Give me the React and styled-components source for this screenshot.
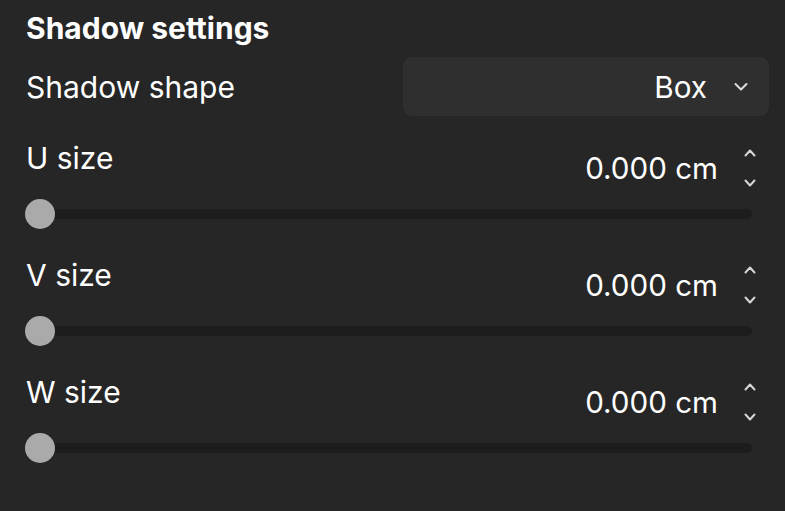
import React from "react";
import styled, { createGlobalStyle } from "styled-components";

const Global = createGlobalStyle`
  html, body { margin: 0; padding: 0; background: #262626; }
  body { font-family: Inter, "Noto Sans", sans-serif; color: #ffffff; }
`;

const Panel = styled.div`
  width: 785px;
  height: 511px;
  box-sizing: border-box;
  padding: 10px 16px 0 25px;
  background: #262626;
  display: flex;
  flex-direction: column;
`;

const Heading = styled.h2`
  margin: 0 0 0 1px;
  font-size: 30px;
  font-weight: 700;
  line-height: 36px;
`;

const ShapeRow = styled.div`
  display: flex;
  align-items: center;
  justify-content: space-between;
  margin-top: 11px;
`;

const Label = styled.span`
  font-size: 30px;
  font-weight: 400;
  line-height: 36px;
  margin-left: 1px;
`;

const Select = styled.button`
  width: 366px;
  height: 59px;
  border: none;
  border-radius: 9px;
  background: #2f2f2f;
  color: #fff;
  font-family: inherit;
  font-size: 29.7px;
  display: flex;
  align-items: center;
  justify-content: flex-end;
  gap: 27px;
  padding: 0 21px 0 0;
`;

const SizeGroup = styled.div`
  display: flex;
  flex-direction: column;
  margin-top: ${(p) => p.$mt}px;
`;

const SizeHead = styled.div`
  display: flex;
  justify-content: space-between;
  align-items: flex-start;
`;

const Value = styled.div`
  display: flex;
  align-items: center;
  gap: 26px;
  margin-top: 8px;
  margin-right: 13px;
  font-size: 29.6px;
  line-height: 36px;
`;

const Stepper = styled.div`
  display: flex;
  flex-direction: column;
  gap: 20px;
`;

const Track = styled.div`
  position: relative;
  height: 10px;
  margin: 21px 17px 0 0;
  border-radius: 5px;
  background: #1d1d1d;
`;

const Thumb = styled.div`
  position: absolute;
  left: 0;
  top: -10px;
  width: 30px;
  height: 30px;
  border-radius: 50%;
  background: #aaaaaa;
`;

const StepChevron = ({ up }) => (
  <svg width="12" height="10" viewBox="0 0 12 10" style={{ display: "block" }}>
    <path
      d={up ? "M1.5 7.5 L6 2.5 L10.5 7.5" : "M1.5 2.5 L6 7.5 L10.5 2.5"}
      fill="none"
      stroke="#d6d6d6"
      strokeWidth="2"
      strokeLinecap="round"
      strokeLinejoin="round"
    />
  </svg>
);

const DropChevron = () => (
  <svg width="14" height="10" viewBox="0 0 14 10" style={{ display: "block" }}>
    <path
      d="M1.5 2 L7 7.5 L12.5 2"
      fill="none"
      stroke="#dedede"
      strokeWidth="2"
      strokeLinecap="round"
      strokeLinejoin="round"
    />
  </svg>
);

const sizes = ["U size", "V size", "W size"];

export default function App() {
  return (
    <>
      <Global />
      <Panel>
        <Heading>Shadow settings</Heading>
        <ShapeRow>
          <Label>Shadow shape</Label>
          <Select>
            <span>Box</span>
            <DropChevron />
          </Select>
        </ShapeRow>
        {sizes.map((s, i) => (
          <SizeGroup key={s} $mt={i === 0 ? 24 : 38}>
            <SizeHead>
              <Label>{s}</Label>
              <Value>
                <span>0.000 cm</span>
                <Stepper>
                  <StepChevron up />
                  <StepChevron />
                </Stepper>
              </Value>
            </SizeHead>
            <Track>
              <Thumb />
            </Track>
          </SizeGroup>
        ))}
      </Panel>
    </>
  );
}
